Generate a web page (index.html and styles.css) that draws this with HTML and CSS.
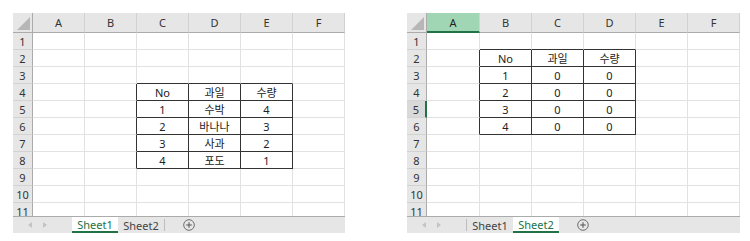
FILE: index.html
```html
<!DOCTYPE html>
<html lang="ko">
<head>
  <meta charset="UTF-8" />
  <title>Sheets</title>
  <link rel="stylesheet" href="styles.css">
</head>
<body>
  <!-- Sheet1: source data -->
  <div class="sheet">
    <div class="grid">
      <div class="c h corner"><span class="tri"></span></div><div class="c h">A</div><div class="c h">B</div><div class="c h">C</div><div class="c h">D</div><div class="c h">E</div><div class="c h">F</div>
      <div class="c rh">1</div><div class="c"></div><div class="c"></div><div class="c"></div><div class="c"></div><div class="c"></div><div class="c"></div>
      <div class="c rh">2</div><div class="c"></div><div class="c"></div><div class="c"></div><div class="c"></div><div class="c"></div><div class="c"></div>
      <div class="c rh">3</div><div class="c"></div><div class="c"></div><div class="c tt"></div><div class="c tt"></div><div class="c tt"></div><div class="c"></div>
      <div class="c rh">4</div><div class="c"></div><div class="c tl"></div><div class="c t">No</div><div class="c t">과일</div><div class="c t">수량</div><div class="c"></div>
      <div class="c rh">5</div><div class="c"></div><div class="c tl"></div><div class="c t">1</div><div class="c t">수박</div><div class="c t">4</div><div class="c"></div>
      <div class="c rh">6</div><div class="c"></div><div class="c tl"></div><div class="c t">2</div><div class="c t">바나나</div><div class="c t">3</div><div class="c"></div>
      <div class="c rh">7</div><div class="c"></div><div class="c tl"></div><div class="c t">3</div><div class="c t">사과</div><div class="c t">2</div><div class="c"></div>
      <div class="c rh">8</div><div class="c"></div><div class="c tl"></div><div class="c t">4</div><div class="c t">포도</div><div class="c t">1</div><div class="c"></div>
      <div class="c rh">9</div><div class="c"></div><div class="c"></div><div class="c"></div><div class="c"></div><div class="c"></div><div class="c"></div>
      <div class="c rh">10</div><div class="c"></div><div class="c"></div><div class="c"></div><div class="c"></div><div class="c"></div><div class="c"></div>
      <div class="c rh">11</div><div class="c"></div><div class="c"></div><div class="c"></div><div class="c"></div><div class="c"></div><div class="c"></div>
    </div>
    <div class="tabs">
      <div class="nav">
        <svg width="4" height="6" viewBox="0 0 4 6"><path d="M4 0 L0 3 L4 6 Z" fill="#c4c4c4"/></svg>
        <svg width="4" height="6" viewBox="0 0 4 6"><path d="M0 0 L4 3 L0 6 Z" fill="#c4c4c4"/></svg>
      </div>
      <div class="tab active">Sheet1</div>
      <div class="tab">Sheet2</div>
      <div class="sep"></div>
      <div class="add">
        <svg width="12" height="12" viewBox="0 0 12 12"><circle cx="6" cy="6" r="5.3" fill="none" stroke="#6e6e6e" stroke-width="1"/><path d="M6 3.2 V8.8 M3.2 6 H8.8" stroke="#555" stroke-width="1"/></svg>
      </div>
    </div>
  </div>

  <!-- Sheet2: result table -->
  <div class="sheet wide">
    <div class="grid">
      <div class="c h corner"><span class="tri"></span></div><div class="c h sel">A</div><div class="c h">B</div><div class="c h">C</div><div class="c h">D</div><div class="c h">E</div><div class="c h">F</div>
      <div class="c rh">1</div><div class="c"></div><div class="c tt"></div><div class="c tt"></div><div class="c tt"></div><div class="c"></div><div class="c"></div>
      <div class="c rh">2</div><div class="c tl"></div><div class="c t">No</div><div class="c t">과일</div><div class="c t">수량</div><div class="c"></div><div class="c"></div>
      <div class="c rh">3</div><div class="c tl"></div><div class="c t">1</div><div class="c t">0</div><div class="c t">0</div><div class="c"></div><div class="c"></div>
      <div class="c rh">4</div><div class="c tl"></div><div class="c t">2</div><div class="c t">0</div><div class="c t">0</div><div class="c"></div><div class="c"></div>
      <div class="c rh rsel">5</div><div class="c tl"></div><div class="c t">3</div><div class="c t">0</div><div class="c t">0</div><div class="c"></div><div class="c"></div>
      <div class="c rh">6</div><div class="c tl"></div><div class="c t">4</div><div class="c t">0</div><div class="c t">0</div><div class="c"></div><div class="c"></div>
      <div class="c rh">7</div><div class="c"></div><div class="c"></div><div class="c"></div><div class="c"></div><div class="c"></div><div class="c"></div>
      <div class="c rh">8</div><div class="c"></div><div class="c"></div><div class="c"></div><div class="c"></div><div class="c"></div><div class="c"></div>
      <div class="c rh">9</div><div class="c"></div><div class="c"></div><div class="c"></div><div class="c"></div><div class="c"></div><div class="c"></div>
      <div class="c rh">10</div><div class="c"></div><div class="c"></div><div class="c"></div><div class="c"></div><div class="c"></div><div class="c"></div>
      <div class="c rh">11</div><div class="c"></div><div class="c"></div><div class="c"></div><div class="c"></div><div class="c"></div><div class="c"></div>
    </div>
    <div class="tabs">
      <div class="nav">
        <svg width="4" height="6" viewBox="0 0 4 6"><path d="M4 0 L0 3 L4 6 Z" fill="#c4c4c4"/></svg>
        <svg width="4" height="6" viewBox="0 0 4 6"><path d="M0 0 L4 3 L0 6 Z" fill="#c4c4c4"/></svg>
      </div>
      <div class="sep"></div>
      <div class="tab">Sheet1</div>
      <div class="tab active">Sheet2</div>
      <div class="add">
        <svg width="12" height="12" viewBox="0 0 12 12"><circle cx="6" cy="6" r="5.3" fill="none" stroke="#6e6e6e" stroke-width="1"/><path d="M6 3.2 V8.8 M3.2 6 H8.8" stroke="#555" stroke-width="1"/></svg>
      </div>
    </div>
  </div>
</body>
</html>
```

FILE: styles.css
```css
body {
  margin: 0;
  padding: 13px 0 0 13px;
  display: flex;
  gap: 62px;
  background: #fff;
  font-family: "Noto Sans", "Noto Sans CJK KR", sans-serif;
  font-size: 11px;
  color: #222;
}
.grid {
  display: grid;
  grid-template-columns: 20px repeat(6, 52px);
  grid-template-rows: 20px;
  grid-auto-rows: 17px;
  height: 203px;
  overflow: hidden;
}
.wide .grid {
  grid-template-columns: 20px 53px repeat(5, 52px);
}
.c {
  box-sizing: border-box;
  border-right: 1px solid #e2e2e2;
  border-bottom: 1px solid #e2e2e2;
  display: flex;
  align-items: center;
  justify-content: center;
  line-height: 1;
  white-space: nowrap;
}
.h {
  background: #e6e6e6;
  border-right-color: #d2d2d2;
  border-bottom-color: #ababab;
  color: #333;
}
.h.sel {
  background: #a0d6b4;
  border-bottom: 2px solid #217346;
  color: #222;
}
.rh {
  background: #e6e6e6;
  border-right-color: #ababab;
  border-bottom-color: #d2d2d2;
  color: #333;
}
.rh.rsel {
  border-right: 2px solid #217346;
  background: #d9d9d9;
}
.corner {
  align-items: flex-end;
  justify-content: flex-end;
  padding: 0 2px 2px 0;
  border-right-color: #ababab;
}
.tri {
  width: 13px;
  height: 13px;
  background: #b7b7b7;
  clip-path: polygon(100% 0, 100% 100%, 0 100%);
}
.t {
  border-right-color: #333;
  border-bottom-color: #333;
}
.tl {
  border-right-color: #333;
}
.tt {
  border-bottom-color: #333;
}
.tabs {
  display: flex;
  align-items: stretch;
  height: 16px;
  background: #e6e6e6;
  border-top: 1px solid #ababab;
}
.nav {
  width: 59px;
  display: flex;
  align-items: center;
  gap: 11px;
  padding-left: 15px;
  box-sizing: border-box;
}
.sheet.wide .nav {
  width: 59px;
}
.tab {
  width: 46px;
  box-sizing: border-box;
  display: flex;
  align-items: center;
  justify-content: center;
  color: #444;
}
.tab.active {
  background: #fff;
  color: #217346;
  border-bottom: 2px solid #217346;
  padding-top: 1px;
}
.sep {
  width: 1px;
  background: #bdbdbd;
  margin: 2px 0;
}
.add {
  display: flex;
  align-items: center;
  margin-left: 18px;
}
```
